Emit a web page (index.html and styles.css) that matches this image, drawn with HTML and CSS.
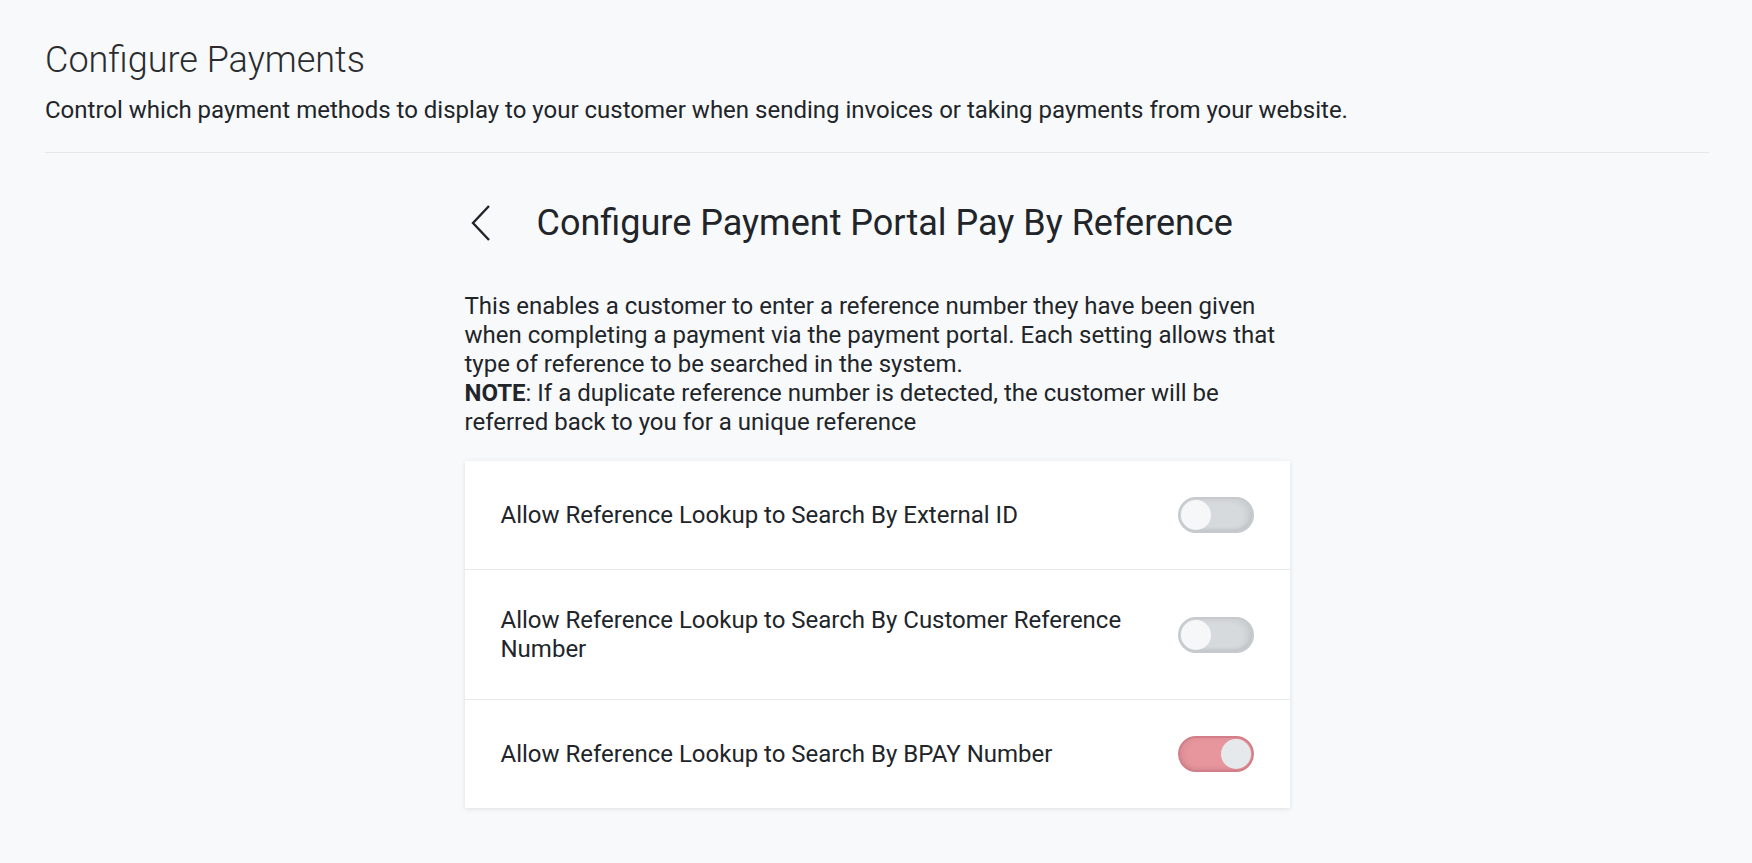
FILE: index.html
```html
<!DOCTYPE html>
<html lang="en">
<head>
    <meta charset="UTF-8">
    <meta name="viewport" content="width=device-width, initial-scale=1.0">
    <title>Configure Payments</title>
    <link rel="stylesheet" href="styles.css">
</head>
<body>

<div class="page">
    <div class="page-header">
        <h1>Configure Payments</h1>
        <p>Control which payment methods to display to your customer when sending invoices or taking payments from your website.</p>
    </div>

    <div class="settings">
        <div class="settings-title">
            <button class="back-btn" type="button" aria-label="Back">
                <svg width="20" height="36" viewBox="0 0 20 36">
                    <polyline points="18,1 2,18 18,35" fill="none" stroke="#212529" stroke-width="2.4"/>
                </svg>
            </button>
            <h2>Configure Payment Portal Pay By Reference</h2>
        </div>

        <p class="intro">
            This enables a customer to enter a reference number they have been given when completing a payment via the payment portal. Each setting allows that type of reference to be searched in the system.<br>
            <strong>NOTE</strong>: If a duplicate reference number is detected, the customer will be referred back to you for a unique reference
        </p>

        <div class="card">
            <div class="setting-row">
                <span class="setting-label">Allow Reference Lookup to Search By External ID</span>
                <label class="switch">
                    <input type="checkbox">
                    <span class="slider"></span>
                </label>
            </div>
            <div class="setting-row">
                <span class="setting-label">Allow Reference Lookup to Search By Customer Reference Number</span>
                <label class="switch">
                    <input type="checkbox">
                    <span class="slider"></span>
                </label>
            </div>
            <div class="setting-row">
                <span class="setting-label">Allow Reference Lookup to Search By BPAY Number</span>
                <label class="switch">
                    <input type="checkbox" checked>
                    <span class="slider"></span>
                </label>
            </div>
        </div>
    </div>
</div>

</body>
</html>
```

FILE: styles.css
```css
body {
    margin: 0;
    background-color: #f8f9fa;
    font-family: Roboto, "Noto Sans", Arial, sans-serif;
    color: #212529;
}
.page {
    padding: 40px 43px 40px 45px;
}
.page-header {
    border-bottom: 1px solid #e6e7e9;
    padding-bottom: 25px;
}
.page-header h1 {
    margin: 0;
    font-size: 36px;
    line-height: 40px;
    font-weight: 300;
    color: #2a2c2f;
}
.page-header p {
    margin: 14px 0 0;
    font-size: 24px;
    line-height: 33px;
}
.settings {
    width: 825px;
    margin: 0 auto;
}
.settings-title {
    display: flex;
    align-items: center;
    margin-top: 48px;
}
.back-btn {
    background: none;
    border: none;
    padding: 0 0 0 6px;
    width: 72px;
    height: 40px;
    text-align: left;
    cursor: pointer;
}
.back-btn svg {
    display: block;
}
.settings-title h2 {
    margin: 0;
    font-size: 36px;
    line-height: 44px;
    font-weight: 400;
}
.intro {
    margin: 47px 0 24px;
    font-size: 24px;
    line-height: 29.1px;
}
.intro strong {
    font-weight: 700;
}
.card {
    background-color: #fff;
    box-shadow: 0 1px 5px rgba(0, 0, 0, 0.1);
}
.setting-row {
    display: flex;
    align-items: center;
    justify-content: space-between;
    gap: 40px;
    padding: 36px;
    border-bottom: 1px solid #e8e9eb;
}
.setting-row:last-child {
    border-bottom: none;
}
.setting-label {
    font-size: 24px;
    line-height: 28.5px;
}
.switch {
    position: relative;
    flex-shrink: 0;
    width: 76px;
    height: 36px;
}
.switch input {
    display: none;
}
.slider {
    position: absolute;
    inset: 0;
    box-sizing: border-box;
    border-radius: 18px;
    border: 2px solid #c6c9cd;
    background-color: #d7dadd;
    box-shadow: inset -4px 0 6px rgba(0, 0, 0, 0.08), inset 0 -2px 3px rgba(0, 0, 0, 0.05);
    cursor: pointer;
}
.slider::before {
    content: "";
    position: absolute;
    top: 1px;
    left: 1px;
    width: 30px;
    height: 30px;
    border-radius: 50%;
    background-color: #f6f7f9;
}
.switch input:checked + .slider {
    background-color: #e8969e;
    border-color: #d37d88;
    box-shadow: inset 4px 0 6px rgba(0, 0, 0, 0.06), inset 0 -2px 3px rgba(0, 0, 0, 0.05);
}
.switch input:checked + .slider::before {
    left: auto;
    right: 1px;
    background-color: #e6e9ec;
}
```
